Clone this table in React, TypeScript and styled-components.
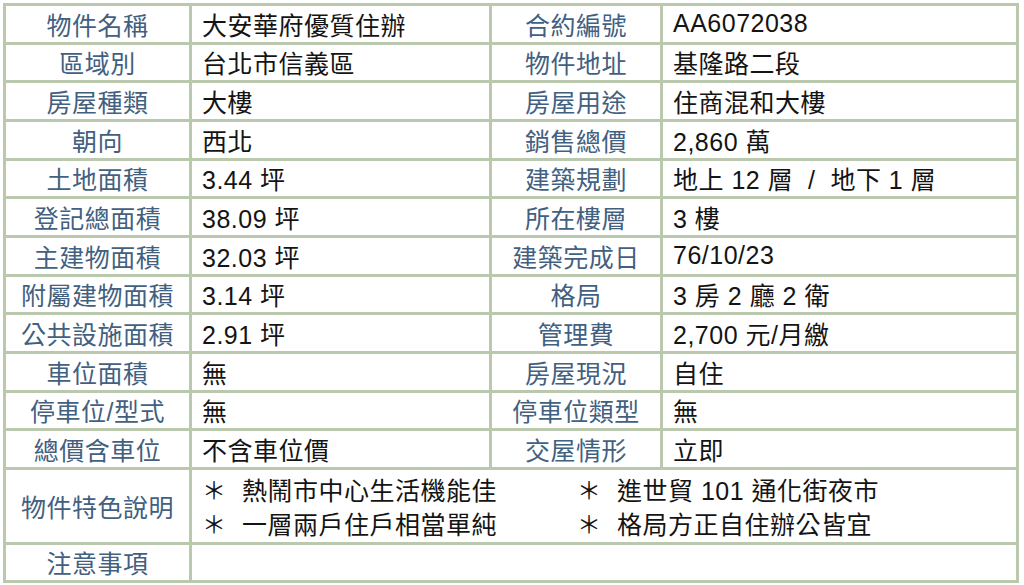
import styled, { createGlobalStyle } from 'styled-components';

const GlobalStyle = createGlobalStyle`
  html, body {
    margin: 0;
    padding: 0;
    background: #ffffff;
  }
  body {
    font-family: "Liberation Sans", "Noto Sans CJK TC", sans-serif;
  }
`;

interface Row {
  label: string;
  value: string;
  label2: string;
  value2: string;
}

const rows: Row[] = [
  { label: '物件名稱', value: '大安華府優質住辦', label2: '合約編號', value2: 'AA6072038' },
  { label: '區域別', value: '台北市信義區', label2: '物件地址', value2: '基隆路二段' },
  { label: '房屋種類', value: '大樓', label2: '房屋用途', value2: '住商混和大樓' },
  { label: '朝向', value: '西北', label2: '銷售總價', value2: '2,860 萬' },
  {
    label: '土地面積',
    value: '3.44 坪',
    label2: '建築規劃',
    value2: '地上 12 層\u00a0\u00a0/\u00a0\u00a0地下 1 層',
  },
  { label: '登記總面積', value: '38.09 坪', label2: '所在樓層', value2: '3 樓' },
  { label: '主建物面積', value: '32.03 坪', label2: '建築完成日', value2: '76/10/23' },
  { label: '附屬建物面積', value: '3.14 坪', label2: '格局', value2: '3 房 2 廳 2 衛' },
  { label: '公共設施面積', value: '2.91 坪', label2: '管理費', value2: '2,700 元/月繳' },
  { label: '車位面積', value: '無', label2: '房屋現況', value2: '自住' },
  { label: '停車位/型式', value: '無', label2: '停車位類型', value2: '無' },
  { label: '總價含車位', value: '不含車位價', label2: '交屋情形', value2: '立即' },
];

const features = [
  '熱鬧市中心生活機能佳',
  '進世貿 101 通化街夜市',
  '一層兩戶住戶相當單純',
  '格局方正自住辦公皆宜',
];

const App = () => {
  return (
    <>
      <GlobalStyle />
      <Sheet>
        {rows.map((r) => (
          <Line key={r.label}>
            <LabelCell>{r.label}</LabelCell>
            <ValueCell>{r.value}</ValueCell>
            <LabelCell>{r.label2}</LabelCell>
            <ValueCell>{r.value2}</ValueCell>
          </Line>
        ))}
        <LabelCell>物件特色說明</LabelCell>
        <ValueCell $span={3}>
          <FeatureList>
            {features.map((f) => (
              <Feature key={f}>
                <Star>＊</Star>
                {f}
              </Feature>
            ))}
          </FeatureList>
        </ValueCell>
        <LabelCell>注意事項</LabelCell>
        <ValueCell $span={3} />
      </Sheet>
    </>
  );
};

export default App;

const Sheet = styled.div`
  display: grid;
  grid-template-columns: 183px 297px 168px 353px;
  grid-template-rows: repeat(12, 35.67px) 72px 35px;
  gap: 3px;
  padding: 3px;
  margin: 3px 0 0 3px;
  width: 1010px;
  background: #bac8ad;
  font-size: 25px;
  letter-spacing: 0.5px;
`;

const Line = styled.div`
  display: contents;
`;

const LabelCell = styled.div`
  display: flex;
  align-items: center;
  justify-content: center;
  background: #ffffff;
  color: #42607f;
  white-space: nowrap;
`;

const ValueCell = styled.div<{ $span?: number }>`
  display: flex;
  align-items: center;
  padding-left: 10px;
  background: #ffffff;
  color: #141414;
  white-space: nowrap;
  grid-column: span ${(p) => p.$span ?? 1};
`;

const FeatureList = styled.div`
  display: grid;
  grid-template-columns: 375px 1fr;
  grid-auto-rows: 34px;
  align-items: center;
`;

const Feature = styled.div`
  display: flex;
  align-items: center;
`;

const Star = styled.span`
  width: 40px;
  font-size: 24px;
  color: #141414;
`;
